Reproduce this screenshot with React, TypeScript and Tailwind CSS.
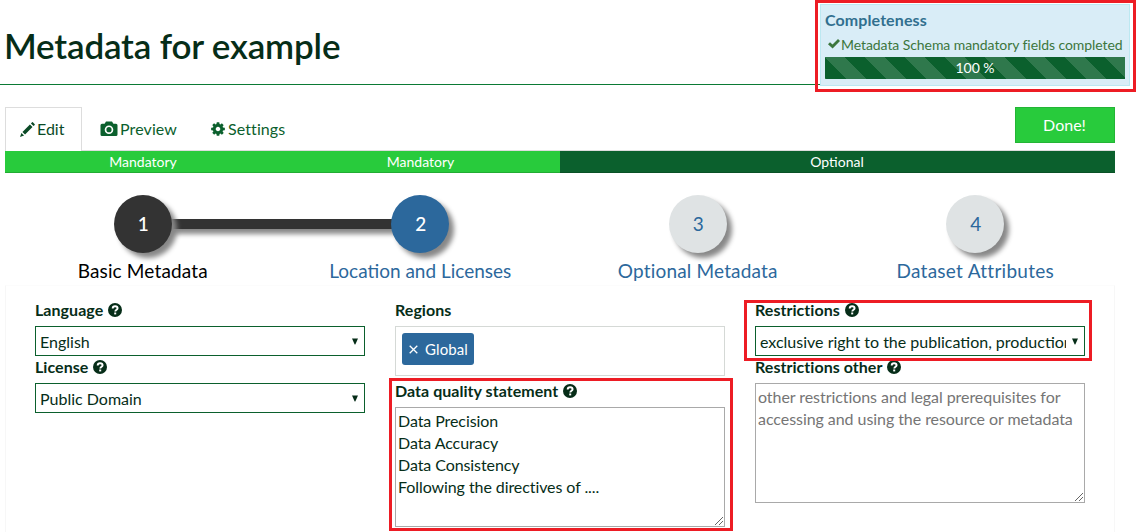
import React from "react";

const S = "shrink-0 fill-current";

function Pencil() {
  return (
    <svg className={S} width="15" height="15" viewBox="-20 -20 1240 1240">
      <g transform="matrix(1 0 0 -1 0 1200)">
        <path d="M1011 1210q19 0 33 -13l153 -153q13 -14 13 -33t-13 -33l-99 -92l-214 214l95 96q13 14 32 14zM1013 800l-615 -614l-214 214l614 614zM317 96l-333 -112l110 335z" />
      </g>
    </svg>
  );
}

function Camera() {
  return (
    <svg className={S} width="18" height="16" viewBox="0 0 18 16">
      <path
        fillRule="evenodd"
        d="M6 .5h6l1.400 2.200H16a1.500 1.500 0 0 1 1.500 1.500v9.300A1.500 1.500 0 0 1 16 15H2a1.500 1.500 0 0 1-1.500-1.500V4.200A1.500 1.500 0 0 1 2 2.700h2.600zM9 4.400a4.300 4.300 0 1 0 0 8.600 4.300 4.300 0 0 0 0-8.600zM9 6.100a2.600 2.600 0 1 1 0 5.200 2.600 2.600 0 0 1 0-5.200z"
      />
    </svg>
  );
}

function Cog() {
  return (
    <svg className={S} width="16" height="16" viewBox="0 0 1792 1792">
      <path d="M1152 896q0-106-75-181t-181-75-181 75-75 181 75 181 181 75 181-75 75-181zm512-109v222q0 12-8 23t-20 13l-185 28q-19 54-39 91 35 50 107 138 10 12 10 25t-9 23q-27 37-99 108t-94 71q-12 0-26-9l-138-108q-44 23-91 38-16 136-29 186-7 28-36 28h-222q-14 0-24.5-8.5t-11.5-21.5l-28-184q-49-16-90-37l-141 107q-10 9-25 9-14 0-25-11-126-114-165-168-7-10-7-23 0-12 8-23 15-21 51-66.5t54-70.5q-27-50-41-99l-183-27q-13-2-21-12.5t-8-23.5v-222q0-12 8-23t19-13l186-28q14-46 39-92-40-57-107-138-10-12-10-24 0-10 9-23 26-36 98.5-107.5t94.500-71.500q13 0 26 10l138 107q44-23 91-38 16-136 29-186 7-28 36-28h222q14 0 24.500 8.500t11.500 21.500l28 184q49 16 90 37l142-107q9-9 24-9 13 0 25 10 129 119 165 170 7 8 7 22 0 12-8 23-15 21-51 66.500t-54 70.500q26 50 41 98l183 28q13 2 21 12.500t8 23.500z" />
    </svg>
  );
}

function Check() {
  return (
    <svg className={S} width="12" height="10" viewBox="0 0 12 10">
      <path d="M0 5.300 2 3.300 4.500 5.600 10 0 12 2 4.600 9.600z" />
    </svg>
  );
}

function Help() {
  return (
    <svg className={S} width="14" height="14" viewBox="0 0 14 14">
      <circle cx="7" cy="7" r="7" />
      <path d="M4.700 5.500C4.700 4 5.700 3.200 7.100 3.200S9.600 4 9.600 5.300C9.600 6.700 7.300 6.900 7.300 8.600" fill="none" stroke="#fff" strokeWidth="1.900" />
      <rect x="6.200" y="9.500" width="2" height="1.900" fill="#fff" />
    </svg>
  );
}

function Label({ text, help = true }: { text: string; help?: boolean }) {
  return (
    <div className="flex h-[27px] items-center gap-[5px] pb-[6px] text-[16px] leading-[21px] font-bold tracking-[0.04px]">
      <span>{text}</span>
      {help && <Help />}
    </div>
  );
}

function Select({ value }: { value: string }) {
  return (
    <div className="flex h-[30px] items-center border border-[#0b602d] pr-[6px] pl-1">
      <span className="grow overflow-hidden pt-[2px] text-[16px] leading-[22px] whitespace-nowrap">{value}</span>
      <svg className="ml-[6px] shrink-0 fill-current" width="6" height="7" viewBox="0 0 6 7">
        <path d="M0 .5h6L3.300 6.500h-.6z" />
      </svg>
    </div>
  );
}

function TextBox({ lines, muted = false }: { lines: string[]; muted?: boolean }) {
  return (
    <div className={`relative h-[120px] border border-[#a9a9a9] px-[2px] pt-[2px] text-[16px] leading-[22px] ${muted ? "tracking-[-0.06px] text-[#757575]" : "tracking-[-0.08px]"}`}>
      {lines.map((l) => (
        <div key={l} className="whitespace-nowrap">{l}</div>
      ))}
      <svg className="absolute right-[1px] bottom-[1px]" width="8" height="8" viewBox="0 0 8 8">
        <path d="M0 8 8 0M4 8 8 4" stroke="#555" strokeWidth=".9" />
      </svg>
    </div>
  );
}

const steps = [
  { n: 1, t: "Basic Metadata", c: "bg-[#333] text-white font-medium", l: "text-black tracking-[0.15px]" },
  { n: 2, t: "Location and Licenses", c: "bg-[#2c689c] text-white font-medium", l: "text-[#2c689c]" },
  { n: 3, t: "Optional Metadata", c: "bg-[#dfe3e4] text-[#2c689c]", l: "text-[#2c689c] tracking-[0.17px]" },
  { n: 4, t: "Dataset Attributes", c: "bg-[#dfe3e4] text-[#2c689c]", l: "text-[#2c689c] tracking-[0.27px]" },
];

export default function App() {
  return (
    <div className="relative h-[532px] w-[1137px] overflow-hidden bg-white font-['Lato',sans-serif] text-[16px] text-[#062d18]">
      <header className="h-[85px] w-[1120px] border-b border-[#0b7a35] pt-[21px] pl-1">
        <h1 className="text-[35px] leading-[48px] font-semibold tracking-[-0.17px]">Metadata for example</h1>
      </header>

      <aside className="absolute top-0 left-[815px] h-[92px] w-[321px] border-3 border-[#ed1c24] pt-px pl-[2px]">
        <div className="h-[82px] w-[310px] border border-[#bce8f1] bg-[#d9edf7] px-1">
          <h2 className="pt-1 text-[16px] leading-[22px] font-bold tracking-[0.1px] text-[#31708f]">Completeness</h2>
          <div className="flex h-[25px] items-center pt-px pl-[3px] text-[14px] tracking-[-0.07px] whitespace-nowrap text-[#3c763d]">
            <Check />
            <span className="pl-px">Metadata Schema mandatory fields completed</span>
          </div>
          <div className="mt-px h-[22px] bg-[#0b602d] bg-[linear-gradient(45deg,rgba(255,255,255,.15)_25%,transparent_25%,transparent_50%,rgba(255,255,255,.15)_50%,rgba(255,255,255,.15)_75%,transparent_75%,transparent)] bg-[size:40px_40px] text-center text-[14px] leading-[22px] text-white">
            100 %
          </div>
        </div>
      </aside>

      <main className="ml-[5px] w-[1110px] pt-[22px]">
        <nav className="flex h-[44px] border-b border-[#ddd] text-[16px] text-[#0b602d]">
          <div className="flex h-[44px] w-[77px] items-center gap-[2px] border border-b-0 border-[#ddd] bg-white pb-px pl-[14px] text-[#0b4a26]">
            <Pencil />
            <span>Edit</span>
          </div>
          <div className="flex w-[112px] items-center gap-[2px] pl-[18px] tracking-[0.1px]">
            <Camera />
            <span>Preview</span>
          </div>
          <div className="flex items-center gap-[2px] pl-[16px] tracking-[0.1px]">
            <Cog />
            <span>Settings</span>
          </div>
          <button className="ml-auto h-[36px] w-[100px] border border-[#23b535] bg-[#28cb3c] pr-px text-[16px] text-white">Done!</button>
        </nav>

        <div className="flex h-[22px] text-center text-[14px] leading-[22px] text-white">
          <div className="w-[277px] bg-[#28cb3c] pr-px shadow-[inset_0_-1px_0_rgba(0,0,0,.15)]">Mandatory</div>
          <div className="w-[278px] bg-[#28cb3c] pr-px shadow-[inset_0_-1px_0_rgba(0,0,0,.15)]">Mandatory</div>
          <div className="w-[555px] bg-[#0b602d] pr-px shadow-[inset_0_-1px_0_rgba(0,0,0,.15)]">Optional</div>
        </div>

        <div className="relative grid h-[112px] grid-cols-4 pt-[22px]">
          <div className="absolute top-[46px] left-[138px] h-[10px] w-[277px] bg-[#333] shadow-[5px_5px_5px_#888]" />
          {steps.map((s) => (
            <div key={s.n} className="relative flex flex-col items-center pr-[2px]">
              <div className={`flex size-[58px] items-center justify-center rounded-full pl-px text-[19px] shadow-[5px_5px_5px_#888] ${s.c}`}>{s.n}</div>
              <div className={`pt-1 text-[19px] leading-[27px] whitespace-nowrap ${s.l}`}>{s.t}</div>
            </div>
          ))}
        </div>

        <section className="flex h-[260px] gap-[30px] border border-x-[#f7f7f7] border-t-[#fcfcfc] px-[29px] pt-[13px]">
          <div className="w-[330px]">
            <Label text="Language" />
            <Select value="English" />
            <Label text="License" />
            <Select value="Public Domain" />
          </div>
          <div className="w-[330px]">
            <Label text="Regions" help={false} />
            <div className="h-[50px] border border-[#d5d9d6] p-[6px]">
              <div className="flex h-[32px] w-[72px] items-center rounded-[3px] bg-[#2c689c] pl-[7px] text-white">
                <svg width="9" height="9" viewBox="0 0 9 9">
                  <path d="M.7.7l7.600 7.600M8.300.7.7 8.300" stroke="#fff" strokeWidth="1.300" />
                </svg>
                <span className="pl-[7px] text-[15px] tracking-[0.1px]">Global</span>
              </div>
            </div>
            <div className="h-1" />
            <Label text="Data quality statement" />
            <TextBox lines={["Data Precision", "Data Accuracy", "Data Consistency", "Following the directives of ...."]} />
          </div>
          <div className="w-[330px]">
            <Label text="Restrictions" />
            <Select value="exclusive right to the publication, production" />
            <Label text="Restrictions other" />
            <TextBox muted lines={["other restrictions and legal prerequisites for", "accessing and using the resource or metadata"]} />
          </div>
        </section>
      </main>

      <div className="pointer-events-none absolute top-[300px] left-[744px] h-[61px] w-[348px] border-3 border-[#ed1c24]" />
      <div className="pointer-events-none absolute top-[378px] left-[389px] h-[153px] w-[344px] border-3 border-[#ed1c24]" />
    </div>
  );
}
